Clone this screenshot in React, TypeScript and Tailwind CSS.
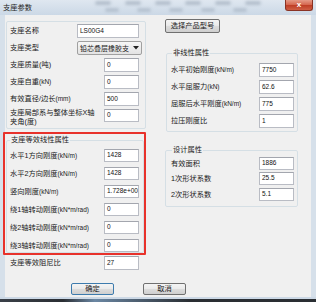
import React from "react";

function L({ children }: { children: React.ReactNode }) {
  return <span className="text-[6.5px]">{children}</span>;
}

function Box({ value, w, h = 14 }: { value: string; w: number; h?: number }) {
  return (
    <div
      className="shrink-0 overflow-hidden whitespace-nowrap bg-white border border-[#b9bcc4] border-t-[#a3a6ae] flex items-center pl-[2px] font-['Liberation_Sans',sans-serif] text-[6.5px] text-[#111]"
      style={{ width: w, height: h }}
    >
      {value}
    </div>
  );
}

function Row({
  label,
  value,
  lw,
  iw = 35,
  h = 14,
  className = "",
}: {
  label: React.ReactNode;
  value: string;
  lw: number;
  iw?: number;
  h?: number;
  className?: string;
}) {
  return (
    <div className={"flex items-center shrink-0 " + className} style={{ height: h }}>
      <div className="shrink-0 whitespace-nowrap" style={{ width: lw }}>
        {label}
      </div>
      <Box value={value} w={iw} h={h} />
    </div>
  );
}

function WinButton({ text, w, primary = false }: { text: string; w: number; primary?: boolean }) {
  return (
    <div
      className={
        "shrink-0 flex items-center justify-center rounded-[2px] border bg-[linear-gradient(180deg,#f4f4f4_0%,#ebebeb_45%,#dddddd_50%,#cfcfcf_100%)] " +
        (primary ? "border-[#3d7bad]" : "border-[#707070]")
      }
      style={{ width: w, height: 12 }}
    >
      {text}
    </div>
  );
}

export default function App() {
  return (
    <div className="relative w-[316px] h-[302px] overflow-hidden bg-[#cdd9e6] font-['Liberation_Sans','Noto_Sans_CJK_SC',sans-serif] text-[7.25px] leading-none text-[#1a1a1a]">
      {/* title bar */}
      <div className="relative h-[15px] flex items-start bg-[linear-gradient(180deg,#dfe7f0,#cbd8e6)]">
        <div className="absolute left-[95px] top-[1px] flex gap-[14px] opacity-50">
          {[0, 1, 2, 3, 4, 5].map((i) => (
            <div key={i} className="w-[16px] h-[4px] rounded-full bg-[#8d9aab] blur-[1.5px]" />
          ))}
        </div>
        <div className="absolute left-[105px] top-[8px] flex gap-[18px] opacity-40">
          {[0, 1, 2, 3, 4].map((i) => (
            <div key={i} className="w-[14px] h-[4px] rounded-full bg-[#8d9aab] blur-[1.5px]" />
          ))}
        </div>
        <span className="relative ml-[3px] mt-[4px] text-[#222]">支座参数</span>
        <div className="relative ml-auto mr-[3px] w-[28px] h-[11px] rounded-b-[3px] border border-t-0 border-[#8a3324] bg-[linear-gradient(180deg,#e59a87_0%,#d4644c_50%,#bf3f27_55%,#cf5f45_100%)] flex items-center justify-center text-white text-[8px] font-bold">
          x
        </div>
      </div>

      {/* body */}
      <div className="flex h-[282px]">
        <div className="w-[5px] bg-[#d6e0ea]" />
        <div className="w-[306px] bg-[#f0f0f0] flex flex-col">
          <div className="flex">
            {/* left column */}
            <div className="w-[141px] flex flex-col shrink-0">
              <div className="mt-[6px] ml-[1px] w-[140px] h-[108px] border border-[#d5dfe5] rounded-[2px] pt-[2px] pl-[3px] flex flex-col gap-[3px]">
                <Row label="支座名称" value="LS00G4" lw={67} iw={62} />
                <div className="flex items-center h-[14px]">
                  <div className="w-[67px]">支座类型</div>
                  <div className="w-[65px] h-[14px] border border-[#a0a0a0] rounded-[2px] bg-[linear-gradient(180deg,#f6f6f6,#e3e3e3)] flex items-center pl-[2px] pr-[2px] overflow-hidden">
                    <span className="whitespace-nowrap text-[7px]">铅芯叠层橡胶支</span>
                    <svg width="6" height="4" viewBox="0 0 6 4" className="ml-auto shrink-0">
                      <path d="M0 0 H6 L3 3.5 Z" fill="#222" />
                    </svg>
                  </div>
                </div>
                <Row label="支座质量(吨)" value="0" lw={94} />
                <Row label={<>支座自重<L>(kN)</L></>} value="0" lw={94} />
                <Row label={<>有效直径/边长<L>(mm)</L></>} value="500" lw={94} />
                <div className="flex items-start h-[14px]">
                  <div className="w-[94px] leading-[9px] -mt-[1px]">
                    <div>支座局部系与整体坐标X轴</div>
                    <div>夹角(度)</div>
                  </div>
                  <Box value="0" w={35} h={13} />
                </div>
              </div>

              <fieldset className="mt-[6px] ml-[1px] w-[138px] h-[118px] border border-[#d5dfe5] rounded-[2px] pl-[3px]">
                <legend className="px-[1px] leading-[10px]">支座等效线性属性</legend>
                <div className="mt-[4px] flex flex-col gap-[5px]">
                  <Row label={<>水平1方向刚度<L>(kN/m)</L></>} value="1428" lw={94} h={13} />
                  <Row label={<>水平2方向刚度<L>(kN/m)</L></>} value="1428" lw={94} h={13} />
                  <Row label={<>竖向刚度<L>(kN/m)</L></>} value="1.728e+00" lw={94} h={13} />
                  <Row label={<>绕1轴转动刚度<L>(kN*m/rad)</L></>} value="0" lw={94} h={13} />
                  <Row label={<>绕2轴转动刚度<L>(kN*m/rad)</L></>} value="0" lw={94} h={13} />
                  <Row label={<>绕3轴转动刚度<L>(kN*m/rad)</L></>} value="0" lw={94} h={13} />
                </div>
              </fieldset>

              <Row label="支座等效阻尼比" value="27" lw={94} className="mt-[3px] ml-[5px]" />
            </div>

            {/* right column */}
            <div className="ml-[19px] w-[133px] flex flex-col shrink-0">
              <div className="mt-[4px] w-[55px] h-[14px] flex items-center justify-center rounded-[2px] border border-[#707070] bg-[linear-gradient(180deg,#f4f4f4_0%,#ebebeb_45%,#dddddd_50%,#cfcfcf_100%)]">
                选择产品型号
              </div>

              <fieldset className="mt-[15px] ml-[1px] w-[132px] h-[84px] border border-[#d5dfe5] rounded-[2px] pl-[4px]">
                <legend className="ml-[1px] px-[1px] leading-[10px]">非线性属性</legend>
                <div className="mt-[5px] flex flex-col gap-[3px]">
                  <Row label={<>水平初始刚度<L>(kN/m)</L></>} value="7750" lw={88} />
                  <Row label={<>水平屈服力<L>(kN)</L></>} value="62.6" lw={88} />
                  <Row label={<>屈服后水平刚度<L>(kN/m)</L></>} value="775" lw={88} />
                  <Row label="拉压刚度比" value="1" lw={88} />
                </div>
              </fieldset>

              <fieldset className="mt-[13px] w-[133px] h-[62px] border border-[#d5dfe5] rounded-[2px] pl-[5px]">
                <legend className="ml-[1px] px-[1px] leading-[10px]">设计属性</legend>
                <div className="mt-[2px] flex flex-col">
                  <Row label="有效面积" value="1886" lw={88} h={13} />
                  <Row label="1次形状系数" value="25.5" lw={88} h={13} className="mt-[2px]" />
                  <Row label="2次形状系数" value="5.1" lw={88} h={13} className="mt-[3px]" />
                </div>
              </fieldset>
            </div>
          </div>

          {/* buttons */}
          <div className="mt-[13px] flex pl-[66px] gap-[29px]">
            <WinButton text="确定" w={43} primary />
            <WinButton text="取消" w={43} />
          </div>
        </div>
        <div className="w-[5px] bg-[#d6e0ea]" />
      </div>
      <div className="h-[2px] bg-[#cdd9e6]" />
      <div className="h-[3px] bg-[linear-gradient(90deg,#3a4048_0%,#2a2e33_20%,#6b87a3_30%,#2a2e33_60%,#2a2e33_100%)]" />

      {/* red annotation */}
      <div className="absolute left-[3px] top-[132px] w-[143px] h-[123px] border-2 border-[#e8322b] rounded-[1px]" />
    </div>
  );
}
